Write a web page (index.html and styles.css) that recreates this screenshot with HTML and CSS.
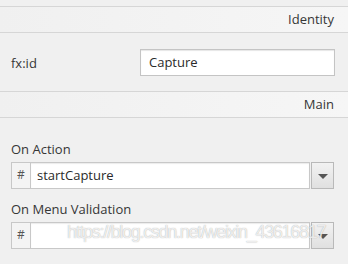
FILE: index.html
```html
<!DOCTYPE html>
<html lang="en">
<head>
    <meta charset="UTF-8">
    <title>Inspector</title>
    <link rel="stylesheet" href="styles.css">
</head>
<body>

<div class="top-strip"></div>

<div class="section-header">Identity</div>
<div class="identity-body">
    <span class="prop-label">fx:id</span>
    <div class="text-field">Capture</div>
</div>

<div class="section-header">Main</div>
<div class="main-body">
    <div class="prop-title">On Action</div>
    <div class="combo">
        <div class="combo-hash">#</div>
        <div class="combo-value">startCapture</div>
        <div class="combo-btn"><span class="arrow"></span></div>
    </div>

    <div class="prop-title">On Menu Validation</div>
    <div class="combo">
        <div class="combo-hash">#</div>
        <div class="combo-value"></div>
        <div class="combo-btn"><span class="arrow"></span></div>
    </div>
    <div class="watermark">https://blog.csdn.net/weixin_43616817</div>
</div>

</body>
</html>
```

FILE: styles.css
```css
body {
    margin: 0;
    background-color: #f0f0f0;
    font-family: "Open Sans", "Noto Sans", sans-serif;
    font-size: 13px;
    color: #363636;
    width: 348px;
    height: 264px;
    overflow: hidden;
}
.top-strip {
    height: 6px;
    border-bottom: 1px solid #d6d6d6;
}
.section-header {
    height: 25px;
    line-height: 25px;
    text-align: right;
    padding-right: 14px;
    border-bottom: 1px solid #d6d6d6;
    background: linear-gradient(90deg, #f0f0f0, #f6f6f6);
    font-size: 13px;
}
.identity-body {
    height: 58px;
    display: flex;
    align-items: center;
    border-bottom: 1px solid #d6d6d6;
}
.prop-label {
    width: 129px;
    padding-left: 11px;
    margin-top: 2px;
}
.text-field {
    box-sizing: border-box;
    width: 195px;
    height: 27px;
    line-height: 25px;
    padding-left: 8px;
    background: #ffffff;
    border: 1px solid #c4c4c4;
    box-shadow: inset 0 1px 1px #e6e6e6;
    color: #2a2a2a;
}
.main-body {
    position: relative;
    padding: 21px 14px 0 11px;
}
.prop-title {
    height: 23px;
    line-height: 20px;
}
.combo {
    display: flex;
    box-sizing: border-box;
    height: 27px;
    margin-bottom: 10px;
}
.combo-hash {
    width: 18px;
    border: 1px solid #c8c8c8;
    border-right: none;
    background: #f4f4f4;
    text-align: center;
    line-height: 24px;
    font-size: 12px;
    color: #555;
}
.combo-value {
    flex: 1;
    border: 1px solid #c8c8c8;
    background: #ffffff;
    padding-left: 6px;
    line-height: 25px;
    color: #2a2a2a;
    box-shadow: inset 0 1px 1px #ececec;
}
.combo-btn {
    width: 21px;
    margin-left: 1px;
    border: 1px solid #b9b9b9;
    background: linear-gradient(#f2f2f2, #e0e0e0);
    display: flex;
    align-items: center;
    justify-content: center;
}
.arrow {
    width: 0;
    height: 0;
    border-left: 5px solid transparent;
    border-right: 5px solid transparent;
    border-top: 5px solid #555555;
    margin-top: 2px;
}
.watermark {
    position: absolute;
    left: 67px;
    top: 104px;
    font-family: "Liberation Sans", Arial, sans-serif;
    font-size: 18px;
    letter-spacing: -1.3px;
    color: rgba(255, 255, 255, 0.8);
    text-shadow: 0 0 1px rgba(100, 100, 100, 0.6);
    white-space: nowrap;
}
```
